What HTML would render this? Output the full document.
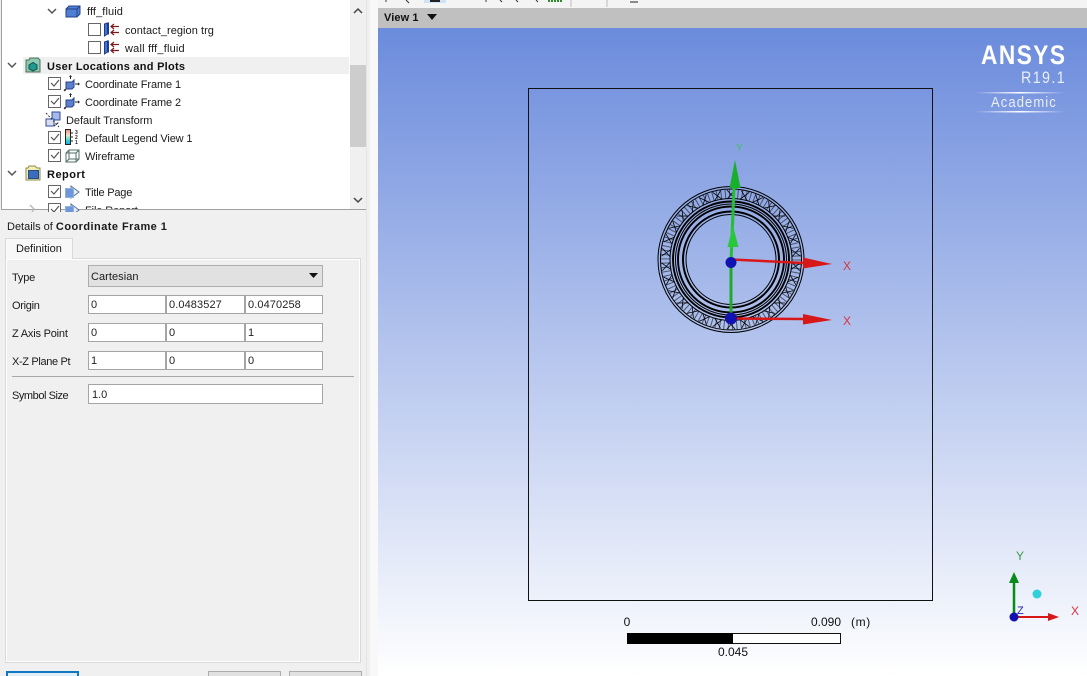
<!DOCTYPE html>
<html><head><meta charset="utf-8">
<style>
html,body{margin:0;padding:0;width:1087px;height:676px;overflow:hidden}
body{position:relative;background:#f0f0f0;font-family:"Liberation Sans",sans-serif;font-size:11px;color:#1a1a1a}
.t{position:absolute;white-space:nowrap;line-height:14px}
.b{font-weight:bold;color:#111}
.a{position:absolute}
.i{position:absolute;background:#fff;border:1px solid #a5a5a5;box-sizing:border-box;line-height:19px;padding-left:2px;color:#222;font-size:11px;height:19px}
</style></head><body>
<!-- tree -->
<div class="a" style="left:1px;top:0;width:366px;height:210px;background:#fff;border:1px solid #a0a0a0;border-top:0;box-sizing:border-box"></div>
<div class="a" style="left:23px;top:57px;width:326px;height:17px;background:#f0f0f0"></div>
<div class="a" style="left:350px;top:0;width:16px;height:209px;background:#f0f0f0"></div>
<div class="a" style="left:350px;top:65px;width:16px;height:82px;background:#cdcdcd"></div>
<svg class="a" style="left:0;top:0" width="370" height="212" viewBox="0 0 370 212" fill="none">
<g stroke="#555" stroke-width="1.5">
<path d="M48 9l4 4 4-4M8 63l4 4 4-4M8 171l4 4 4-4"/>
<path d="M354 13l4-4 4 4M354 198l4 4 4-4" stroke="#444"/>
</g>
<path d="M30 205l4 4-2 3" stroke="#bbb" stroke-width="1.5"/>
<!-- checkboxes -->
<g fill="#fff" stroke="#666">
<rect x="88.500" y="23.500" width="12" height="12"/><rect x="88.500" y="41.500" width="12" height="12"/>
<rect x="48.500" y="77.500" width="12" height="12"/><rect x="48.500" y="95.500" width="12" height="12"/>
<rect x="48.500" y="131.500" width="12" height="12"/><rect x="48.500" y="149.500" width="12" height="12"/>
<rect x="48.500" y="185.500" width="12" height="12"/><rect x="48.500" y="203.500" width="12" height="12"/>
</g>
<g stroke="#555" stroke-width="1.200">
<path d="M51 83l3 3 5-6M51 101l3 3 5-6M51 137l3 3 5-6M51 155l3 3 5-6M51 191l3 3 5-6M51 209l3 3 5-6"/>
</g>
<!-- fff_fluid icon -->
<path d="M66 9l3-3h11v8l-3 3H66z" fill="#4f7fd0" stroke="#24418a"/><path d="M66 9h11v8M77 9l3-3" stroke="#24418a"/>
<!-- boundary icons -->
<g id="bd"><path d="M104.500 24l3-1v11l-3 2z" fill="#3f74d8" stroke="#1d3c8c"/><path d="M107.500 23h1v11h-1" stroke="#1d3c8c"/><path d="M119 26.500h-8m3-2.500l-3 2.500 3 2.500M119 32.500h-8m3-2.500l-3 2.500 3 2.500" stroke="#7a1c1c" stroke-width="1.200"/></g>
<use href="#bd" y="18"/>
<!-- user locations folder -->
<path d="M26 60h3l1-2h8l2 2v12H26z" fill="#8ec9b4" stroke="#4f6f55"/>
<path d="M29 65l4-2.500 4 2.500v4l-4 2-4-2z" fill="#1f9a8e" stroke="#16504f"/>
<!-- coord frames -->
<g id="cf"><path d="M66 82h6l2-2v7l-2 2h-6z" fill="#5d80cc" stroke="#24418a"/><path d="M70.500 79v-3M75 84h4M66 89l-2 2" stroke="#222"/><path d="M70.500 75l-1.500 2h3zM80 84l-2-1.500v3zM64 91v-2l2 2z" fill="#222"/></g>
<use href="#cf" y="18"/>
<!-- default transform -->
<path d="M52 113h8v8h-8z" fill="#a8b8ea" stroke="#2f4a9a" transform="translate(0 -1)"/>
<path d="M46 119h8v7h-8z" fill="#d8ddf4" stroke="#2f4a9a"/>
<path d="M46 113l13 14M54 126l5-4" stroke="#333" stroke-dasharray="2 1.500"/>
<!-- legend -->
<defs><linearGradient id="lg" x1="0" y1="0" x2="0" y2="1"><stop offset="0" stop-color="#f08a8a"/><stop offset=".4" stop-color="#e8e8c8"/><stop offset=".7" stop-color="#40d8c8"/><stop offset="1" stop-color="#20a0e0"/></linearGradient></defs>
<rect x="65.500" y="129.500" width="5" height="15" fill="url(#lg)" stroke="#222"/>
<path d="M71 133h2M71 137h2M71 141h2" stroke="#222"/>
<text x="75" y="134" font-size="5" font-weight="bold" fill="#222">3</text>
<text x="75" y="139" font-size="5" font-weight="bold" fill="#222">2</text>
<text x="75" y="144" font-size="5" font-weight="bold" fill="#222">1</text>
<!-- wireframe -->
<path d="M66 153h10v9H66zM66 153l3-3h10v9l-3 3M76 153l3-3M69 150v9h10M69 159l-3 3" stroke="#4f6f6a"/>
<!-- report -->
<path d="M26 168h2l1-2h6l2 2h3v12H26z" fill="#f2eeb0" stroke="#8a8a55"/><rect x="28.500" y="170.500" width="10" height="8" fill="#3c6cc0" stroke="#274a80"/>
<!-- title page icons -->
<g id="tp"><path d="M71 186l8 6-8 6z" fill="#e6ecf8" stroke="#56759a"/><rect x="65.500" y="188.500" width="8" height="9" fill="#6d97d8" stroke="#8fb0e0"/></g>
<use href="#tp" y="18"/>
</svg>
<div class="t" style="left:87px;top:5px;letter-spacing:.1px">fff_fluid</div>
<div class="t" style="left:125px;top:24px;letter-spacing:.05px">contact_region trg</div>
<div class="t" style="left:125px;top:42px;letter-spacing:.2px">wall fff_fluid</div>
<div class="t b" style="left:47px;top:60px;letter-spacing:.26px">User Locations and Plots</div>
<div class="t" style="left:85px;top:78px;letter-spacing:-.1px">Coordinate Frame 1</div>
<div class="t" style="left:85px;top:96px;letter-spacing:-.1px">Coordinate Frame 2</div>
<div class="t" style="left:66px;top:114px;letter-spacing:-.06px">Default Transform</div>
<div class="t" style="left:85px;top:132px;letter-spacing:-.15px">Default Legend View 1</div>
<div class="t" style="left:85px;top:150px;letter-spacing:-.1px">Wireframe</div>
<div class="t b" style="left:47px;top:168px;letter-spacing:.5px">Report</div>
<div class="t" style="left:85px;top:186px;letter-spacing:-.2px">Title Page</div>
<div class="a" style="left:85px;top:204px;width:60px;height:5px;overflow:hidden"><div class="t" style="left:0;top:0;letter-spacing:-.1px">File Report</div></div>
<!-- details -->
<div class="t" style="left:7px;top:220px">Details of <b style="letter-spacing:.45px">Coordinate Frame 1</b></div>
<div class="a" style="left:5px;top:258px;width:356px;height:405px;background:#f0f0f0;border:1px solid #d9d9d9;box-shadow:inset 0 0 0 1px #fff;box-sizing:border-box"></div>
<div class="a" style="left:5px;top:238px;width:68px;height:21px;background:#f8f8f8;border:1px solid #d9d9d9;border-bottom:0;box-sizing:border-box"></div>
<div class="t" style="left:16px;top:242px">Definition</div>
<div class="t" style="left:12px;top:271px;letter-spacing:-.2px">Type</div>
<div class="a" style="left:88px;top:265px;width:235px;height:22px;background:#e1e1e1;border:1px solid #adadad;box-sizing:border-box"></div>
<div class="t" style="left:91px;top:270px;letter-spacing:.05px">Cartesian</div>
<svg class="a" style="left:309px;top:273px" width="10" height="6"><path d="M0 0h9l-4.500 5z" fill="#111"/></svg>
<div class="t" style="left:12px;top:299px;letter-spacing:-.3px">Origin</div>
<div class="i" style="left:88px;top:295px;width:78px">0</div>
<div class="i" style="left:166px;top:295px;width:79px;letter-spacing:.1px">0.0483527</div>
<div class="i" style="left:245px;top:295px;width:78px;letter-spacing:.1px">0.0470258</div>
<div class="t" style="left:12px;top:327px;letter-spacing:-.2px">Z Axis Point</div>
<div class="i" style="left:88px;top:323px;width:78px">0</div>
<div class="i" style="left:166px;top:323px;width:79px">0</div>
<div class="i" style="left:245px;top:323px;width:78px">1</div>
<div class="t" style="left:12px;top:355px;letter-spacing:-.35px">X-Z Plane Pt</div>
<div class="i" style="left:88px;top:351px;width:78px">1</div>
<div class="i" style="left:166px;top:351px;width:79px">0</div>
<div class="i" style="left:245px;top:351px;width:78px">0</div>
<div class="a" style="left:12px;top:376px;width:342px;height:1px;background:#a8a8a8"></div>
<div class="t" style="left:12px;top:389px;letter-spacing:-.45px">Symbol Size</div>
<div class="i" style="left:88px;top:384px;width:235px;height:20px;line-height:21px;padding-left:3px">1.0</div>
<!-- bottom buttons -->
<div class="a" style="left:6px;top:671px;width:73px;height:5px;background:#e1eef8;border:2px solid #0f78c0;border-bottom:0;box-sizing:border-box"></div>
<div class="a" style="left:208px;top:671px;width:73px;height:5px;background:#e1e1e1;border:1px solid #adadad;border-bottom:0;box-sizing:border-box"></div>
<div class="a" style="left:289px;top:671px;width:73px;height:5px;background:#e1e1e1;border:1px solid #adadad;border-bottom:0;box-sizing:border-box"></div>
<div class="a" style="left:366px;top:0;width:1px;height:676px;background:#e4e4e4"></div>
<div class="a" style="left:370px;top:0;width:8px;height:676px;background:#f8f8f8"></div>
<!-- viewer top -->
<div class="a" style="left:378px;top:0;width:709px;height:8px;background:#f4f4f4"></div>
<svg class="a" style="left:378px;top:0" width="300" height="8" fill="none">
<rect x="46" y="0" width="22" height="3" fill="#cfe3f7"/><rect x="52" y="0" width="10" height="2" fill="#222"/>
<path d="M28 0l3 3M8 0v2M108 0v2M122 0l2 2M138 0l2 2M158 0l2 2" stroke="#333"/>
<path d="M170 1h14" stroke="#2a8a2a" stroke-width="2" stroke-dasharray="2 1"/>
<path d="M193 0v7M229 0v7" stroke="#bbb"/><path d="M252 2h8" stroke="#222"/>
</svg>
<div class="a" style="left:378px;top:8px;width:709px;height:20px;background:#c0c0c0"></div>
<div class="t b" style="left:384px;top:11px;font-size:11px;letter-spacing:.1px">View 1</div>
<svg class="a" style="left:427px;top:14px" width="10" height="6"><path d="M0 0h10l-5 6z" fill="#111"/></svg>
<!-- viewport -->
<div class="a" style="left:378px;top:28px;width:709px;height:648px;background:linear-gradient(#6b8bdc,#ffffff)"></div>
<svg class="a" style="left:378px;top:28px" width="709" height="648" viewBox="378 28 709 648" fill="none" font-family="'Liberation Sans',sans-serif">
<rect x="528.500" y="88.500" width="404" height="512" stroke="#111"/>
<!-- rings -->
<g stroke="#000">
<circle cx="731" cy="259.500" r="73" stroke-width="1"/>
<circle cx="731" cy="259.500" r="70.500" stroke-width="1"/>
<circle cx="731" cy="259.500" r="61" stroke-width="1"/>
<circle cx="731" cy="259.500" r="58" stroke-width="1.900"/>
<circle cx="731" cy="259.500" r="55.500" stroke-width="1"/>
<circle cx="731" cy="259.500" r="53" stroke-width="1.900"/>
<circle cx="731" cy="259.500" r="48" stroke-width="2"/>
<circle cx="731" cy="259.500" r="45" stroke-width="1"/>
<circle cx="731" cy="259.500" r="65.500" stroke-width="9" stroke="#111" stroke-opacity=".6" stroke-dasharray="1 3.200"/>
<g id="z" stroke-width=".8"><path d="M727 190l8 9M735 190l-8 9"/></g>
<use href="#z" transform="rotate(12 731 259.500)"/><use href="#z" transform="rotate(24 731 259.500)"/><use href="#z" transform="rotate(36 731 259.500)"/><use href="#z" transform="rotate(48 731 259.500)"/><use href="#z" transform="rotate(60 731 259.500)"/><use href="#z" transform="rotate(72 731 259.500)"/><use href="#z" transform="rotate(84 731 259.500)"/><use href="#z" transform="rotate(96 731 259.500)"/><use href="#z" transform="rotate(108 731 259.500)"/><use href="#z" transform="rotate(120 731 259.500)"/><use href="#z" transform="rotate(132 731 259.500)"/><use href="#z" transform="rotate(144 731 259.500)"/><use href="#z" transform="rotate(156 731 259.500)"/><use href="#z" transform="rotate(168 731 259.500)"/><use href="#z" transform="rotate(180 731 259.500)"/><use href="#z" transform="rotate(192 731 259.500)"/><use href="#z" transform="rotate(204 731 259.500)"/><use href="#z" transform="rotate(216 731 259.500)"/><use href="#z" transform="rotate(228 731 259.500)"/><use href="#z" transform="rotate(240 731 259.500)"/><use href="#z" transform="rotate(252 731 259.500)"/><use href="#z" transform="rotate(264 731 259.500)"/><use href="#z" transform="rotate(276 731 259.500)"/><use href="#z" transform="rotate(288 731 259.500)"/><use href="#z" transform="rotate(300 731 259.500)"/><use href="#z" transform="rotate(312 731 259.500)"/><use href="#z" transform="rotate(324 731 259.500)"/><use href="#z" transform="rotate(336 731 259.500)"/><use href="#z" transform="rotate(348 731 259.500)"/>
</g>
<!-- axes -->
<path d="M731 318L731 262" stroke="#1faa2a" stroke-width="3"/>
<path d="M731 262L734 187" stroke="#22c030" stroke-width="3"/>
<path d="M735 160l-5.500 28h11z" fill="#18b02a"/>
<path d="M733 226l-5.500 21h11z" fill="#28c83a"/>
<path d="M731 259.500L804 263" stroke="#d81818" stroke-width="2.500"/>
<path d="M803 257.500l29 6.500-29 4.500z" fill="#d81818"/>
<path d="M731 318.500L804 319" stroke="#d81818" stroke-width="2.500"/>
<path d="M803 314l29 6-29 4.500z" fill="#d81818"/>
<circle cx="731" cy="262.500" r="5.500" fill="#1212b0"/>
<circle cx="731" cy="318.500" r="6" fill="#1212b0"/>
<text x="843" y="270" font-size="12" fill="#d8333a">X</text>
<text x="843" y="325" font-size="12" fill="#d8333a">X</text>
<text x="736" y="151" font-size="10" fill="#3fc060">Y</text>
<!-- logo -->
<text transform="translate(981 64) scale(.84 1)" font-size="27" font-weight="bold" fill="#fff" textLength="100" lengthAdjust="spacing">ANSYS</text>
<text transform="translate(1021 83) scale(.84 1)" font-size="17" fill="#e8eefa" textLength="52" lengthAdjust="spacing">R19.1</text>
<text transform="translate(991 107) scale(.9 1)" font-size="14.500" fill="#e8eefa" textLength="72" lengthAdjust="spacing">Academic</text>
<defs><linearGradient id="wl"><stop offset="0" stop-color="#fff" stop-opacity="0"/><stop offset=".5" stop-color="#fff"/><stop offset="1" stop-color="#fff" stop-opacity="0"/></linearGradient></defs>
<rect x="975" y="92" width="90" height="1.500" fill="url(#wl)"/>
<rect x="975" y="111" width="90" height="1.500" fill="url(#wl)"/>
<!-- scale -->
<text x="627" y="626" font-size="12" fill="#111" text-anchor="middle">0</text>
<text x="811" y="626" font-size="12" fill="#111">0.090</text>
<text x="851" y="626" font-size="12" fill="#111" letter-spacing=".6">(m)</text>
<text x="733" y="656" font-size="12" fill="#111" text-anchor="middle">0.045</text>
<rect x="627.500" y="633.500" width="213" height="10" fill="#fff" stroke="#111"/>
<rect x="627" y="633" width="106" height="11" fill="#000"/>
<!-- triad -->
<path d="M1014 617v-36" stroke="#0a8a1a" stroke-width="2.500"/>
<path d="M1014 572l-5 11h10z" fill="#0a8a1a"/>
<path d="M1014 617h36" stroke="#d81818" stroke-width="2"/>
<path d="M1059 617l-11-4v8z" fill="#d81818"/>
<circle cx="1014" cy="617" r="4.500" fill="#1212b0"/>
<circle cx="1037" cy="594" r="4.500" fill="#30d0d8"/>
<text x="1016" y="560" font-size="12" fill="#3a9a4a">Y</text>
<text x="1071" y="615" font-size="12" fill="#d8333a">X</text>
<text x="1017" y="614" font-size="11" fill="#2222b0">Z</text>
</svg>
</body></html>
